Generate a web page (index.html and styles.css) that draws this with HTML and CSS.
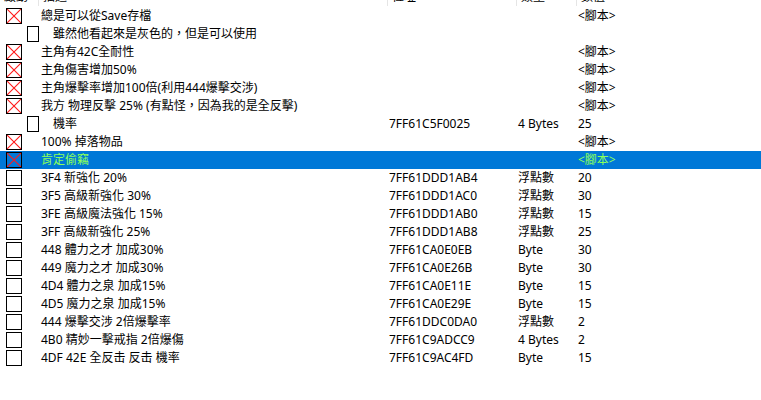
FILE: index.html
```html
<!DOCTYPE html>
<html>
  <head>
    <title>Address List</title>
    <link rel="stylesheet" href="styles.css">
  </head>
  <body>
    <div class="list">
      <div class="head">
        <div class="hcell">啟動</div>
        <div class="hcell">描述</div>
        <div class="hcell">位址</div>
        <div class="hcell">類型</div>
        <div class="hcell last">數值</div>
      </div>

      <!-- entries -->
      <div class="row">
        <div class="act"><span class="cb"><svg class="x" width="14" height="14" viewBox="0 0 14 14"><path d="M0 0L14 14M14 0L0 14"/></svg></span></div>
        <div class="desc">總是可以從Save存檔</div><div></div><div></div><div class="val">&lt;腳本&gt;</div>
      </div>
      <div class="row child">
        <div class="act"><span class="cb"></span></div>
        <div class="desc">雖然他看起來是灰色的，但是可以使用</div><div></div><div></div><div></div>
      </div>
      <div class="row">
        <div class="act"><span class="cb"><svg class="x" width="14" height="14" viewBox="0 0 14 14"><path d="M0 0L14 14M14 0L0 14"/></svg></span></div>
        <div class="desc">主角有42C全耐性</div><div></div><div></div><div class="val">&lt;腳本&gt;</div>
      </div>
      <div class="row">
        <div class="act"><span class="cb"><svg class="x" width="14" height="14" viewBox="0 0 14 14"><path d="M0 0L14 14M14 0L0 14"/></svg></span></div>
        <div class="desc">主角傷害增加50%</div><div></div><div></div><div class="val">&lt;腳本&gt;</div>
      </div>
      <div class="row">
        <div class="act"><span class="cb"><svg class="x" width="14" height="14" viewBox="0 0 14 14"><path d="M0 0L14 14M14 0L0 14"/></svg></span></div>
        <div class="desc">主角爆擊率增加100倍(利用444爆擊交涉)</div><div></div><div></div><div class="val">&lt;腳本&gt;</div>
      </div>
      <div class="row">
        <div class="act"><span class="cb"><svg class="x" width="14" height="14" viewBox="0 0 14 14"><path d="M0 0L14 14M14 0L0 14"/></svg></span></div>
        <div class="desc">我方 物理反擊 25% (有點怪，因為我的是全反擊)</div><div></div><div></div><div class="val">&lt;腳本&gt;</div>
      </div>
      <div class="row child">
        <div class="act"><span class="cb"></span></div>
        <div class="desc">機率</div><div class="addr">7FF61C5F0025</div><div class="type">4 Bytes</div><div class="val">25</div>
      </div>
      <div class="row">
        <div class="act"><span class="cb"><svg class="x" width="14" height="14" viewBox="0 0 14 14"><path d="M0 0L14 14M14 0L0 14"/></svg></span></div>
        <div class="desc">100% 掉落物品</div><div></div><div></div><div class="val">&lt;腳本&gt;</div>
      </div>
      <div class="row selected">
        <div class="act"><span class="cb"><svg class="x" width="14" height="14" viewBox="0 0 14 14"><path d="M0 0L14 14M14 0L0 14"/></svg></span></div>
        <div class="desc">肯定偷竊</div><div></div><div></div><div class="val">&lt;腳本&gt;</div>
      </div>
      <div class="row">
        <div class="act"><span class="cb"></span></div>
        <div class="desc">3F4 新強化 20%</div><div class="addr">7FF61DDD1AB4</div><div class="type">浮點數</div><div class="val">20</div>
      </div>
      <div class="row">
        <div class="act"><span class="cb"></span></div>
        <div class="desc">3F5 高級新強化 30%</div><div class="addr">7FF61DDD1AC0</div><div class="type">浮點數</div><div class="val">30</div>
      </div>
      <div class="row">
        <div class="act"><span class="cb"></span></div>
        <div class="desc">3FE 高級魔法強化 15%</div><div class="addr">7FF61DDD1AB0</div><div class="type">浮點數</div><div class="val">15</div>
      </div>
      <div class="row">
        <div class="act"><span class="cb"></span></div>
        <div class="desc">3FF 高級新強化 25%</div><div class="addr">7FF61DDD1AB8</div><div class="type">浮點數</div><div class="val">25</div>
      </div>
      <div class="row">
        <div class="act"><span class="cb"></span></div>
        <div class="desc">448 體力之才 加成30%</div><div class="addr">7FF61CA0E0EB</div><div class="type">Byte</div><div class="val">30</div>
      </div>
      <div class="row">
        <div class="act"><span class="cb"></span></div>
        <div class="desc">449 魔力之才 加成30%</div><div class="addr">7FF61CA0E26B</div><div class="type">Byte</div><div class="val">30</div>
      </div>
      <div class="row">
        <div class="act"><span class="cb"></span></div>
        <div class="desc">4D4 體力之泉 加成15%</div><div class="addr">7FF61CA0E11E</div><div class="type">Byte</div><div class="val">15</div>
      </div>
      <div class="row">
        <div class="act"><span class="cb"></span></div>
        <div class="desc">4D5 魔力之泉 加成15%</div><div class="addr">7FF61CA0E29E</div><div class="type">Byte</div><div class="val">15</div>
      </div>
      <div class="row">
        <div class="act"><span class="cb"></span></div>
        <div class="desc">444 爆擊交涉 2倍爆擊率</div><div class="addr">7FF61DDC0DA0</div><div class="type">浮點數</div><div class="val">2</div>
      </div>
      <div class="row">
        <div class="act"><span class="cb"></span></div>
        <div class="desc">4B0 精妙一擊戒指 2倍爆傷</div><div class="addr">7FF61C9ADCC9</div><div class="type">4 Bytes</div><div class="val">2</div>
      </div>
      <div class="row">
        <div class="act"><span class="cb"></span></div>
        <div class="desc">4DF 42E 全反击 反击 機率</div><div class="addr">7FF61C9AC4FD</div><div class="type">Byte</div><div class="val">15</div>
      </div>
    </div>
  </body>
</html>
```
FILE: styles.css
```css
body {
  margin: 0;
  background: #fff;
  overflow: hidden;
}
.list {
  font-family: "Noto Sans", "Noto Sans CJK TC", sans-serif;
  font-size: 12px;
  color: #000;
}
.head {
  display: grid;
  grid-template-columns: 39px 349px 129px 60px 1fr;
  height: 19px;
  margin-top: -12px;
  line-height: 17px;
}
.hcell {
  padding-left: 4px;
  border-right: 1px solid #e5e5e5;
  height: 18px;
}
.hcell.last {
  border-right: none;
}
.row {
  display: grid;
  grid-template-columns: 39px 349px 129px 60px 1fr;
  height: 18px;
  line-height: 18px;
  white-space: nowrap;
}
.row.selected {
  background: #0078d7;
  color: #8aff5a;
}
.act {
  display: flex;
  align-items: center;
  padding-left: 6px;
}
.child .act {
  padding-left: 27px;
}
.cb {
  display: block;
  width: 14px;
  height: 14px;
  border: 1px solid #000;
}
.x {
  display: block;
}
.x path {
  fill: none;
  stroke: #ff1a1a;
  stroke-width: 1.1;
}
.desc {
  padding-left: 2px;
}
.child .desc {
  padding-left: 14px;
}
.addr, .type, .val {
  padding-left: 1px;
}
```
